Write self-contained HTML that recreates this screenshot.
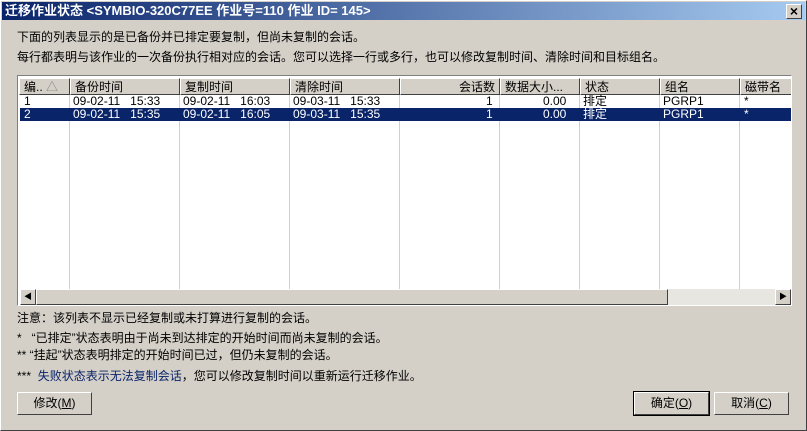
<!DOCTYPE html>
<html><head><meta charset="utf-8"><style>
*{margin:0;padding:0;box-sizing:border-box}
body{width:807px;height:431px;background:#d4d0c8;font-family:"Liberation Sans","Noto Sans CJK SC","WenQuanYi Zen Hei",sans-serif;font-size:12px;color:#000;position:relative;overflow:hidden}
.frame{position:absolute;left:0;top:0;width:807px;height:431px;border:1px solid #fff;border-right-color:#404040;border-bottom-color:#404040}
.title{position:absolute;left:2px;top:2px;width:803px;height:18px;background:linear-gradient(90deg,#0a246a,#a6caf0);color:#fff;font-weight:bold;font-size:13px;line-height:18px;padding-left:3px;white-space:nowrap}
.x{position:absolute;right:3px;top:2px;width:16px;height:15px;background:#d4d0c8;border:1px solid #fff;border-right-color:#404040;border-bottom-color:#404040;color:#000;font-size:14px;line-height:12px;text-align:center;font-weight:bold}
.t{position:absolute;white-space:nowrap;line-height:14px}
.list{position:absolute;left:17px;top:75px;width:775px;height:231px;background:#fff;border:1px solid #808080;border-right-color:#fff;border-bottom-color:#fff;overflow:hidden}
.hdr{position:absolute;top:2px;height:17px;background:#d4d0c8;border:1px solid #fff;border-right-color:#404040;border-bottom-color:#404040;padding:1px 4px;line-height:14px;white-space:nowrap;overflow:hidden}
.vl{position:absolute;top:19px;width:1px;height:195px;background:#d4d0c8}
.row{position:absolute;left:2px;width:771px;height:13px}
.c{position:absolute;line-height:13px;white-space:nowrap;font-size:12px}
.sb{position:absolute;left:2px;top:213px;width:771px;height:16px;background:#e8e6e0}
.btn{position:absolute;height:23px;background:#d4d0c8;border:1px solid #fff;border-right-color:#404040;border-bottom-color:#404040;text-align:center;line-height:21px}
</style></head><body>
<div class="frame"></div>
<div class="title">迁移作业状态 &lt;SYMBIO-320C77EE 作业号=110 作业 ID= 145&gt;<div class="x">×</div></div>
<div class="t" style="left:17px;top:30px">下面的列表显示的是已备份并已排定要复制，但尚未复制的会话。</div>
<div class="t" style="left:17px;top:50px">每行都表明与该作业的一次备份执行相对应的会话。您可以选择一行或多行，也可以修改复制时间、清除时间和目标组名。</div>
<div class="list">
<div class="hdr" style="left:1px;width:51px">编.. <span style="color:#808080">△</span></div>
<div class="hdr" style="left:52px;width:110px">备份时间</div>
<div class="hdr" style="left:162px;width:110px">复制时间</div>
<div class="hdr" style="left:272px;width:110px">清除时间</div>
<div class="hdr" style="left:382px;width:100px;text-align:right">会话数</div>
<div class="hdr" style="left:482px;width:80px">数据大小...</div>
<div class="hdr" style="left:562px;width:80px">状态</div>
<div class="hdr" style="left:642px;width:80px">组名</div>
<div class="hdr" style="left:722px;width:60px">磁带名</div>
<div class="vl" style="left:51px"></div><div class="vl" style="left:161px"></div><div class="vl" style="left:271px"></div><div class="vl" style="left:381px"></div><div class="vl" style="left:481px"></div><div class="vl" style="left:561px"></div><div class="vl" style="left:641px"></div><div class="vl" style="left:721px"></div>
<div class="row" style="top:19px">
<span class="c" style="left:4px">1</span><span class="c" style="left:53px">09-02-11&nbsp;&nbsp;&nbsp;15:33</span><span class="c" style="left:163px">09-02-11&nbsp;&nbsp;&nbsp;16:03</span><span class="c" style="left:273px">09-03-11&nbsp;&nbsp;&nbsp;15:33</span><span class="c" style="left:466px">1</span><span class="c" style="left:523px">0.00</span><span class="c" style="left:563px">排定</span><span class="c" style="left:643px">PGRP1</span><span class="c" style="left:724px">*</span></div>
<div class="row" style="top:32px;background:#0a246a;color:#fff">
<span class="c" style="left:4px">2</span><span class="c" style="left:53px">09-02-11&nbsp;&nbsp;&nbsp;15:35</span><span class="c" style="left:163px">09-02-11&nbsp;&nbsp;&nbsp;16:05</span><span class="c" style="left:273px">09-03-11&nbsp;&nbsp;&nbsp;15:35</span><span class="c" style="left:466px">1</span><span class="c" style="left:523px">0.00</span><span class="c" style="left:563px">排定</span><span class="c" style="left:643px">PGRP1</span><span class="c" style="left:724px">*</span></div>
<div class="sb">
<div class="btn" style="left:0;top:0;width:16px;height:16px;line-height:14px;font-size:8px">◀</div>
<div class="btn" style="left:16px;top:0;width:632px;height:16px"></div>
<div class="btn" style="left:755px;top:0;width:16px;height:16px;line-height:14px;font-size:8px">▶</div>
</div>
</div>
<div class="t" style="left:17px;top:311px">注意：该列表不显示已经复制或未打算进行复制的会话。</div>
<div class="t" style="left:17px;top:331px">*&nbsp;&nbsp;&nbsp;“已排定”状态表明由于尚未到达排定的开始时间而尚未复制的会话。</div>
<div class="t" style="left:17px;top:348px">** “挂起”状态表明排定的开始时间已过，但仍未复制的会话。</div>
<div class="t" style="left:17px;top:369px">***&nbsp;&nbsp;<span style="color:#0a246a">失败状态表示无法复制会话</span>，您可以修改复制时间以重新运行迁移作业。</div>
<div class="btn" style="left:17px;top:392px;width:75px">修改(<u>M</u>)</div>
<div class="btn" style="left:634px;top:392px;width:75px;outline:1px solid #000">确定(<u>O</u>)</div>
<div class="btn" style="left:714px;top:392px;width:75px">取消(<u>C</u>)</div>
</body></html>
